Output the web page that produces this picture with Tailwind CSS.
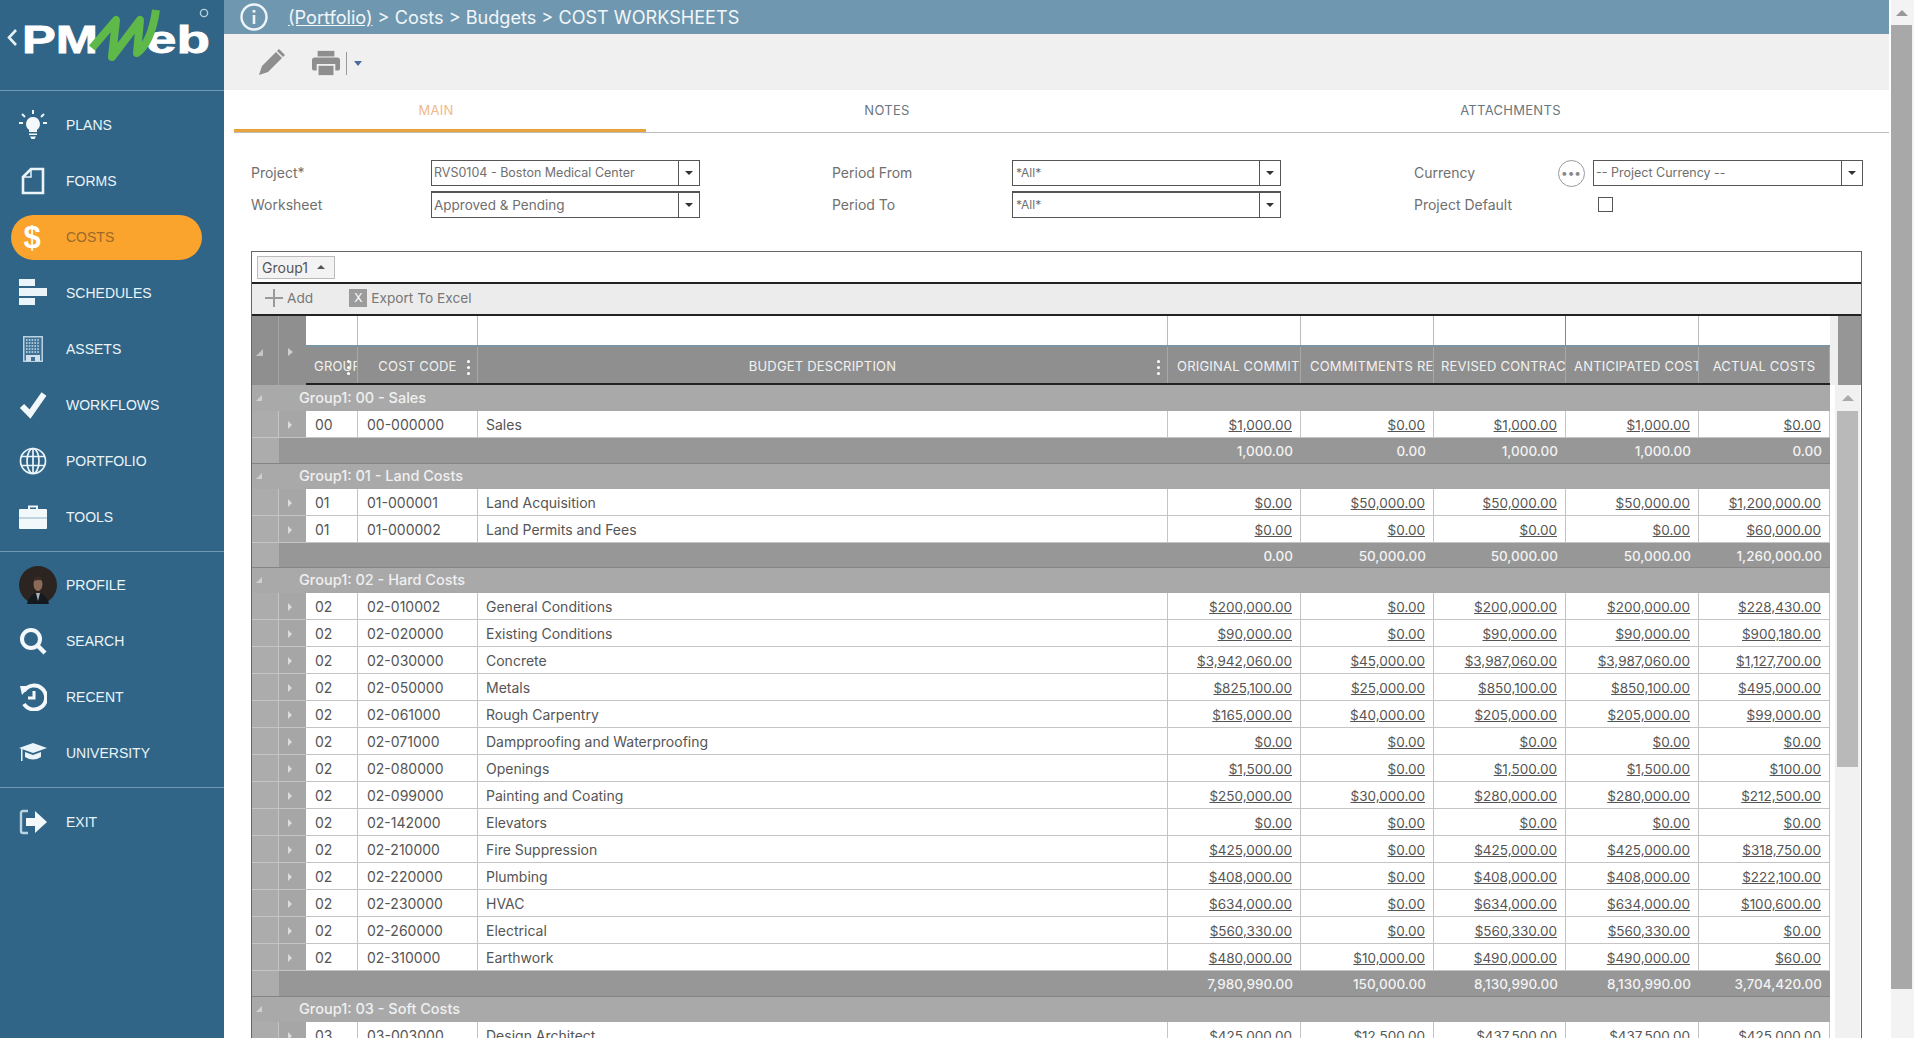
<!DOCTYPE html>
<html lang="en">
<head>
    <meta charset="UTF-8">
    <title>PMWeb - Cost Worksheets</title>
    <script src="https://cdn.jsdelivr.net/npm/@tailwindcss/browser@4"></script>
</head>
<body class="h-screen overflow-hidden bg-white font-['Inter',sans-serif] text-[#555]">
<div class="flex h-[1038px]">

    <!-- Sidebar -->
    <aside class="w-[224px] shrink-0 bg-[#306587] text-[14px] font-['Liberation_Sans',sans-serif] text-[#eaf4f9]">
        <div class="h-[91px] border-b border-[#6f9ab5]">
            <svg width="224" height="90" viewBox="0 0 224 90">
                <path d="M16 30 L9 37.5 L16 45" fill="none" stroke="#e8f0f4" stroke-width="2.6"/>
                <text x="22" y="53" font-family="Liberation Sans" font-weight="700" font-size="39" fill="#fff" stroke="#fff" stroke-width="0.8" textLength="76" lengthAdjust="spacingAndGlyphs">PM</text>
                <text x="146" y="53" font-family="Liberation Sans" font-weight="700" font-size="39" fill="#fff" stroke="#fff" stroke-width="0.8" textLength="64" lengthAdjust="spacingAndGlyphs">eb</text>
                <path d="M92 48 L116 20 L112 57 L140 20 L137 53 C147 46 153 30 156 10" fill="none" stroke="#5eb948" stroke-width="8" stroke-linejoin="round"/>
                <circle cx="204" cy="13" r="3.6" fill="none" stroke="#b9cedb" stroke-width="1.4"/>
            </svg>
        </div>
        <nav class="pt-[6px]">
            <div class="flex h-14 items-center">
                <svg class="ml-[19px] mr-[19px] w-[28px] shrink-0" height="32" viewBox="0 0 28 32" fill="#f3f8fb"><path d="M14 8a7 7 0 0 0-4 12.7V23h8v-2.3A7 7 0 0 0 14 8zM10 24.500h8V26h-8zM11 27.500h6L15.500 30h-3z"/><path d="M14 1v4M3 5l3 3M25 5l-3 3M0 14h4M24 14h4" stroke="#eaf4f9" stroke-width="2"/></svg>
                <span>PLANS</span>
            </div>
            <div class="flex h-14 items-center">
                <svg class="ml-[19px] mr-[19px] w-[28px] shrink-0" height="30" viewBox="0 0 28 30"><path d="M4 11 L12 3 H24 V27 H4 Z" fill="none" stroke="#eaf4f9" stroke-width="2.600"/><path d="M4 11 H12 V3" fill="none" stroke="#eaf4f9" stroke-width="1.500"/></svg>
                <span>FORMS</span>
            </div>
            <div class="flex h-14 items-center">
                <div class="ml-[11px] flex h-[45px] w-[191px] items-center rounded-full bg-[#faa32d]">
                    <span class="ml-[7px] mr-[20px] w-[28px] text-center text-[31px] font-bold leading-none text-white">$</span>
                    <span class="text-[#9a6a2c]">COSTS</span>
                </div>
            </div>
            <div class="flex h-14 items-center">
                <svg class="ml-[19px] mr-[19px] w-[28px] shrink-0" height="28" viewBox="0 0 28 28" fill="#eaf4f9"><path d="M0 0h16v7H0zM0 9h28v8H0zM0 19h16v7H0z"/></svg>
                <span>SCHEDULES</span>
            </div>
            <div class="flex h-14 items-center">
                <svg class="ml-[19px] mr-[19px] w-[28px] shrink-0" height="28" viewBox="0 0 28 28"><rect x="4" y="1" width="20" height="26" fill="#b9d3e2"/><rect x="5.500" y="2.500" width="17" height="23" fill="#3f7294"/><path d="M7 5h14M7 8h14M7 11h14M7 14h14M7 17h14" stroke="#cfe0ea" stroke-width="1.600" stroke-dasharray="1.600 1.200"/><rect x="7" y="20" width="14" height="6" fill="#cfe0ea"/><rect x="12" y="22" width="4" height="4" fill="#3f7294"/></svg>
                <span>ASSETS</span>
            </div>
            <div class="flex h-14 items-center">
                <svg class="ml-[19px] mr-[19px] w-[28px] shrink-0" height="28" viewBox="0 0 28 28"><path d="M3 15 L11 23 L25 3" fill="none" stroke="#f3f8fb" stroke-width="6"/></svg>
                <span>WORKFLOWS</span>
            </div>
            <div class="flex h-14 items-center">
                <svg class="ml-[19px] mr-[19px] w-[28px] shrink-0" height="28" viewBox="0 0 28 28" fill="none" stroke="#eaf4f9" stroke-width="1.700"><circle cx="14" cy="14" r="12.500"/><ellipse cx="14" cy="14" rx="6" ry="12.500"/><path d="M14 1.500v25M2 9.500h24M2 18.500h24"/></svg>
                <span>PORTFOLIO</span>
            </div>
            <div class="flex h-14 items-center">
                <svg class="ml-[19px] mr-[19px] w-[28px] shrink-0" height="26" viewBox="0 0 28 26"><path d="M10 6V2.500h8V6" fill="none" stroke="#eaf4f9" stroke-width="2"/><rect y="5" width="28" height="20" rx="1" fill="#f3f8fb"/><path d="M0 14h28" stroke="#8fb2c6" stroke-width="1"/></svg>
                <span>TOOLS</span>
            </div>
        </nav>
        <div class="mt-[6px] border-t border-[#6f9ab5] pt-[5px]">
            <div class="flex h-14 items-center">
                <svg class="ml-[19px] mr-[9px] w-[38px] shrink-0" height="38" viewBox="0 0 38 38"><circle cx="19" cy="19" r="19" fill="#2b2421"/><path d="M8 38 Q10 28 19 27 Q28 28 30 38 Z" fill="#14181f"/><path d="M17 27h4l-2 8z" fill="#aab4bd"/><ellipse cx="19" cy="18" rx="4.500" ry="7" fill="#8c6a58"/><path d="M14.500 15 Q15 10 19 10.500 Q23.500 10.500 23.500 15 Q21 13 14.500 15" fill="#3a2b24"/></svg>
                <span>PROFILE</span>
            </div>
            <div class="flex h-14 items-center">
                <svg class="ml-[19px] mr-[19px] w-[28px] shrink-0" height="28" viewBox="0 0 28 28" fill="none" stroke="#f3f8fb"><circle cx="12" cy="12" r="9" stroke-width="4"/><path d="M18 18 L26 26" stroke-width="4.500"/></svg>
                <span>SEARCH</span>
            </div>
            <div class="flex h-14 items-center">
                <svg class="ml-[19px] mr-[19px] w-[28px] shrink-0" height="28" viewBox="0 0 28 28" fill="none" stroke="#f3f8fb"><path d="M5 8 A12 12 0 1 1 5 21" stroke-width="4"/><path d="M1 3 L11 3 L3 12 Z" fill="#f3f8fb" stroke="none"/><path d="M15 8v7H9" stroke-width="3"/></svg>
                <span>RECENT</span>
            </div>
            <div class="flex h-14 items-center">
                <svg class="ml-[19px] mr-[19px] w-[28px] shrink-0" height="22" viewBox="0 0 28 22" fill="#eaf4f9"><path d="M14 1 L28 6 L14 11 L0 6 Z"/><path d="M6 10 L14 13 L22 10 V15 Q14 20 6 15 Z"/><path d="M2 7h1.500v12H2z"/></svg>
                <span>UNIVERSITY</span>
            </div>
        </div>
        <div class="mt-[6px] border-t border-[#6f9ab5] pt-[6px]">
            <div class="flex h-14 items-center">
                <svg class="ml-[19px] mr-[19px] w-[28px] shrink-0" height="26" viewBox="0 0 28 26"><path d="M9 2H4Q2 2 2 4V22Q2 24 4 24H9" fill="none" stroke="#b9d3e2" stroke-width="2.400"/><path d="M7 9h9V2l12 11-12 11v-7H7z" fill="#f3f8fb"/></svg>
                <span>EXIT</span>
            </div>
        </div>
    </aside>

    <!-- Main -->
    <main class="w-[1665px] shrink-0 overflow-hidden">
        <div class="flex h-[34px] items-center bg-[#6f98b0] text-[18.1px] text-[#f2f6f8]">
            <svg class="ml-[16px] mr-[20px]" width="28" height="28" viewBox="0 0 28 28" fill="none" stroke="#eef4f7"><circle cx="14" cy="14" r="12.500" stroke-width="2.400"/><path d="M14 12v9" stroke-width="2.600"/><path d="M14 7v2.600" stroke-width="2.800"/></svg>
            <span class="pt-px"><a class="underline">(Portfolio)</a> &gt; Costs &gt; Budgets &gt; COST WORKSHEETS</span>
        </div>
        <div class="flex h-[56px] items-center border-t-2 border-[#f7eef0] bg-[#f0f0f0]">
            <svg class="ml-[32px]" width="30" height="30" viewBox="0 0 30 30"><path d="M3 27 L6 18 L20 4 L26 10 L12 24 Z" fill="#8e8e8e"/><path d="M21 3 L23 1 L29 7 L27 9 Z" fill="#8e8e8e"/></svg>
            <svg class="ml-[26px]" width="28" height="28" viewBox="0 0 30 28" fill="#8e8e8e"><path d="M6 1h18v6H6z"/><path d="M3 8h24q3 0 3 3v9q0 2-2 2h-3v-7H5v7H2q-2 0-2-2v-9q0-3 3-3z"/><path d="M7 17h16v10H7z"/></svg>
            <div class="ml-[6px] h-[23px] w-px bg-[#999]"></div>
            <div class="ml-[7px] border-x-[4px] border-t-[5px] border-x-transparent border-t-[#4c6a9a]"></div>
        </div>

        <!-- Tabs -->
        <div class="ml-[10px] flex h-[43px] border-b border-[#bdbdbd] text-[13px] tracking-[0.3px] text-[#6b7680]">
            <div class="flex w-[412px] items-center justify-center border-b-[3px] border-[#e8a33c] pr-[8px] pt-[3px] text-[#efb98a]">MAIN</div>
            <div class="flex w-[482px] items-center justify-center">NOTES</div>
            <div class="flex w-[761px] items-center justify-center pl-[4px]">ATTACHMENTS</div>
        </div>

        <!-- Form -->
        <div class="ml-[27px] mt-[27px] grid grid-cols-[180px_269px_132px_180px_269px_133px_179px_270px] grid-rows-[26px_27px] gap-y-[5px] text-[14px] text-[#6f6f6f]">
            <div class="flex items-center pb-px">Project*</div>
            <div class="flex border border-[#555] text-[12.5px]"><span class="flex-1 overflow-hidden whitespace-nowrap pl-[2px] leading-[24px]">RVS0104 - Boston Medical Center</span><span class="flex w-[21px] items-center justify-center border-l border-[#555]"><i class="border-x-[4px] border-t-[4px] border-x-transparent border-t-[#333]"></i></span></div>
            <div></div>
            <div class="flex items-center pb-px">Period From</div>
            <div class="flex border border-[#555] text-[12px]"><span class="flex-1 pl-[3px] leading-[24px]">*All*</span><span class="flex w-[21px] items-center justify-center border-l border-[#555]"><i class="border-x-[4px] border-t-[4px] border-x-transparent border-t-[#333]"></i></span></div>
            <div></div>
            <div class="flex items-center justify-between pr-[8px]"><span class="pb-px">Currency</span>
                <span class="flex h-[27px] w-[27px] items-center justify-center rounded-full border border-[#999] text-[12px] font-bold leading-none tracking-[1px] text-[#888]">•••</span>
            </div>
            <div class="flex border border-[#555] text-[12.5px]"><span class="flex-1 pl-[2px] leading-[24px]">-- Project Currency --</span><span class="flex w-[21px] items-center justify-center border-l border-[#555]"><i class="border-x-[4px] border-t-[4px] border-x-transparent border-t-[#333]"></i></span></div>

            <div class="flex items-center pb-px">Worksheet</div>
            <div class="flex border border-[#555] border-t-2 text-[13.5px]"><span class="flex-1 pl-[2px] leading-[24px]">Approved &amp; Pending</span><span class="flex w-[21px] items-center justify-center border-l border-[#555]"><i class="border-x-[4px] border-t-[4px] border-x-transparent border-t-[#333]"></i></span></div>
            <div></div>
            <div class="flex items-center pb-px">Period To</div>
            <div class="flex border border-[#555] border-t-2 text-[12px]"><span class="flex-1 pl-[3px] leading-[24px]">*All*</span><span class="flex w-[21px] items-center justify-center border-l border-[#555]"><i class="border-x-[4px] border-t-[4px] border-x-transparent border-t-[#333]"></i></span></div>
            <div></div>
            <div class="flex items-center pb-px">Project Default</div>
            <div class="flex items-center pl-[5px]"><span class="h-[15px] w-[15px] border border-[#555]"></span></div>
        </div>

        <!-- Grid panel -->
        <div class="ml-[27px] mt-[33px] h-[800px] w-[1611px] border-x border-t border-[#666]">
            <div class="flex h-[32px] items-center border-b-2 border-[#222] pl-[5px]">
                <div class="flex h-[23px] w-[78px] items-center border border-[#bbb] bg-[#f3f3f3] pl-[4px] text-[14px] text-[#555]">Group1<i class="ml-[9px] border-x-[4px] border-b-[4px] border-x-transparent border-b-[#555]"></i></div>
            </div>
            <div class="flex h-[32px] items-center border-b-2 border-[#222] bg-[#ececec] pb-[2px] text-[13.7px] text-[#777]">
                <svg class="ml-[13px]" width="18" height="18" viewBox="0 0 18 18" fill="#999"><path d="M8 0h2v8h8v2h-8v8H8v-8H0V8h8z"/></svg>
                <span class="ml-[4px]">Add</span>
                <span class="ml-[36px] flex h-[18px] w-[18px] items-center justify-center bg-[#9b9b9b] text-[12px] text-white">X</span>
                <span class="ml-[4px]">Export To Excel</span>
            </div>

            <!-- Column headers -->
            <div class="flex h-[69px]">
                <div class="flex w-[54px] bg-[#8f8f8f]">
                    <div class="flex w-[27px] items-center border-r border-[#a5a5a5] pl-[4px] pt-[4px]"><i class="border-b-[7px] border-l-[7px] border-b-[#c4c4c4] border-l-transparent"></i></div>
                    <div class="flex w-[27px] items-center justify-center pr-[4px] pt-[3px]"><i class="border-y-[4px] border-l-[5px] border-y-transparent border-l-[#cfcfcf]"></i></div>
                </div>
                <div class="w-[1524px]">
                    <div class="grid h-[29px] grid-cols-[52px_120px_690px_133px_133px_132px_133px_131px] bg-white">
                        <div class="border-r border-[#bbb]"></div><div class="border-r border-[#bbb]"></div><div class="border-r border-[#bbb]"></div><div class="border-r border-[#bbb]"></div><div class="border-r border-[#bbb]"></div><div class="border-r border-[#888]"></div><div class="border-r border-[#bbb]"></div><div></div>
                    </div>
                    <div id="headRow" class="grid h-[40px] grid-cols-[52px_120px_690px_133px_133px_132px_133px_131px] border-t-2 border-b-2 border-t-[#7b95a5] border-b-[#222] bg-[#8f8f8f] text-[13px] tracking-[0.2px] text-[#f2f2f2]"></div>
                </div>
                <div class="w-[8px] bg-[#efefef]"></div>
                <div class="w-[23px] bg-[#969696]"></div>
            </div>

            <!-- Rows and inner scrollbar -->
            <div class="flex">
                <div id="rows" class="w-[1578px]"></div>
                <div class="w-[5px]"></div>
                <div class="w-[25px] bg-[#f1f1f1] px-[2px]">
                    <div class="flex h-[26px] items-center justify-center"><i class="border-x-[6px] border-b-[6px] border-x-transparent border-b-[#aaa]"></i></div>
                    <div class="h-[356px] bg-[#b9b9b9]"></div>
                </div>
            </div>
        </div>
    </main>

    <!-- Page scrollbar -->
    <div class="w-[25px] shrink-0 pl-[2px]">
        <div class="h-full bg-[#f3f3f3] pr-[2px]">
            <div class="flex h-[25px] items-center justify-center"><i class="border-x-[6px] border-b-[6px] border-x-transparent border-b-[#999]"></i></div>
            <div class="h-[964px] bg-[#a8a8a8]"></div>
        </div>
    </div>
</div>

<script>
    const GRID = 'grid grid-cols-[27px_27px_52px_120px_690px_133px_133px_132px_133px_131px]';

    const heads = [
        ['GROUP', 'pl-[8px]', true], ['COST CODE', 'text-center', true], ['BUDGET DESCRIPTION', 'text-center', true],
        ['ORIGINAL COMMIT', 'pl-[9px]'], ['COMMITMENTS RE', 'pl-[9px]'], ['REVISED CONTRAC', 'pl-[7px]'],
        ['ANTICIPATED COST', 'pl-[8px]'], ['ACTUAL COSTS', 'text-center']
    ];
    document.getElementById('headRow').innerHTML = heads.map((h, i) => `
        <div class="relative overflow-hidden whitespace-nowrap border-r border-[#a8a8a8] leading-[38px] ${h[1]}">${h[0]}
            ${h[2] ? '<span class="absolute right-[7px] top-[13px] block h-[3px] w-[3px] rounded-full bg-white shadow-[0_6px_0_#fff,0_12px_0_#fff]"></span>' : ''}
        </div>`).join('');

    const sections = [
        { name: '00 - Sales', groupH: 'h-[26px]', footH: 'h-[26px]', total: ['1,000.00', '0.00', '1,000.00', '1,000.00', '0.00'], rows: [
            ['00', '00-000000', 'Sales', '$1,000.00', '$0.00', '$1,000.00', '$1,000.00', '$0.00'],
        ]},
        { name: '01 - Land Costs', groupH: 'h-[25px]', footH: 'h-[25px]', total: ['0.00', '50,000.00', '50,000.00', '50,000.00', '1,260,000.00'], rows: [
            ['01', '01-000001', 'Land Acquisition', '$0.00', '$50,000.00', '$50,000.00', '$50,000.00', '$1,200,000.00'],
            ['01', '01-000002', 'Land Permits and Fees', '$0.00', '$0.00', '$0.00', '$0.00', '$60,000.00'],
        ]},
        { name: '02 - Hard Costs', groupH: 'h-[25px]', footH: 'h-[26px]', total: ['7,980,990.00', '150,000.00', '8,130,990.00', '8,130,990.00', '3,704,420.00'], rows: [
            ['02', '02-010002', 'General Conditions', '$200,000.00', '$0.00', '$200,000.00', '$200,000.00', '$228,430.00'],
            ['02', '02-020000', 'Existing Conditions', '$90,000.00', '$0.00', '$90,000.00', '$90,000.00', '$900,180.00'],
            ['02', '02-030000', 'Concrete', '$3,942,060.00', '$45,000.00', '$3,987,060.00', '$3,987,060.00', '$1,127,700.00'],
            ['02', '02-050000', 'Metals', '$825,100.00', '$25,000.00', '$850,100.00', '$850,100.00', '$495,000.00'],
            ['02', '02-061000', 'Rough Carpentry', '$165,000.00', '$40,000.00', '$205,000.00', '$205,000.00', '$99,000.00'],
            ['02', '02-071000', 'Dampproofing and Waterproofing', '$0.00', '$0.00', '$0.00', '$0.00', '$0.00'],
            ['02', '02-080000', 'Openings', '$1,500.00', '$0.00', '$1,500.00', '$1,500.00', '$100.00'],
            ['02', '02-099000', 'Painting and Coating', '$250,000.00', '$30,000.00', '$280,000.00', '$280,000.00', '$212,500.00'],
            ['02', '02-142000', 'Elevators', '$0.00', '$0.00', '$0.00', '$0.00', '$0.00'],
            ['02', '02-210000', 'Fire Suppression', '$425,000.00', '$0.00', '$425,000.00', '$425,000.00', '$318,750.00'],
            ['02', '02-220000', 'Plumbing', '$408,000.00', '$0.00', '$408,000.00', '$408,000.00', '$222,100.00'],
            ['02', '02-230000', 'HVAC', '$634,000.00', '$0.00', '$634,000.00', '$634,000.00', '$100,600.00'],
            ['02', '02-260000', 'Electrical', '$560,330.00', '$0.00', '$560,330.00', '$560,330.00', '$0.00'],
            ['02', '02-310000', 'Earthwork', '$480,000.00', '$10,000.00', '$490,000.00', '$490,000.00', '$60.00'],
        ]},
        { name: '03 - Soft Costs', groupH: 'h-[25px]', rows: [
            ['03', '03-003000', 'Design Architect', '$425,000.00', '$12,500.00', '$437,500.00', '$437,500.00', '$425,000.00'],
        ]},
    ];

    const handle = `
        <div class="border-b border-r border-[#c4c4c4] bg-[#acacac]"></div>
        <div class="flex items-center justify-center border-b border-[#c4c4c4] bg-[#a6a6a6] pr-[6px] pt-[2px]"><i class="border-y-[4px] border-l-[4px] border-y-transparent border-l-[#dcdcdc]"></i></div>`;

    let html = '';
    sections.forEach(s => {
        html += `<div class="flex ${s.groupH} items-center bg-[#a9a9a9] pb-px text-[14.5px] font-medium text-[#f0f0f0]">
            <i class="ml-[4px] border-b-[6px] border-l-[6px] border-b-[#d0d0d0] border-l-transparent"></i>
            <span class="ml-[37px]">Group1: ${s.name}</span></div>`;
        s.rows.forEach(r => {
            html += `<div class="${GRID} h-[27px] text-[13.5px] text-[#555]">${handle}
                <div class="border-b border-r border-[#c4c4c4] pl-[9px] pt-[2px] text-[14px] leading-[24px]">${r[0]}</div>
                <div class="border-b border-r border-[#c4c4c4] pl-[9px] pt-[2px] text-[14px] leading-[24px]">${r[1]}</div>
                <div class="border-b border-r border-[#c4c4c4] pl-[8px] pt-[2px] text-[14px] leading-[24px]">${r[2]}</div>
                ${r.slice(3).map(v => `<div class="border-b border-r border-[#c4c4c4] pr-[8px] pt-[2px] text-right leading-[24px] underline">${v}</div>`).join('')}
            </div>`;
        });
        if (s.total) {
            html += `<div class="${GRID} ${s.footH} border-b border-[#858585] text-[13.5px] font-medium text-[#f2f2f2]">
                <div class="bg-[#acacac]"></div><div class="col-span-4 bg-[#979797]"></div>
                ${s.total.map(v => `<div class="flex items-center justify-end bg-[#979797] pr-[8px] pt-[2px]">${v}</div>`).join('')}
            </div>`;
        }
    });
    document.getElementById('rows').innerHTML = html;
</script>
</body>
</html>
